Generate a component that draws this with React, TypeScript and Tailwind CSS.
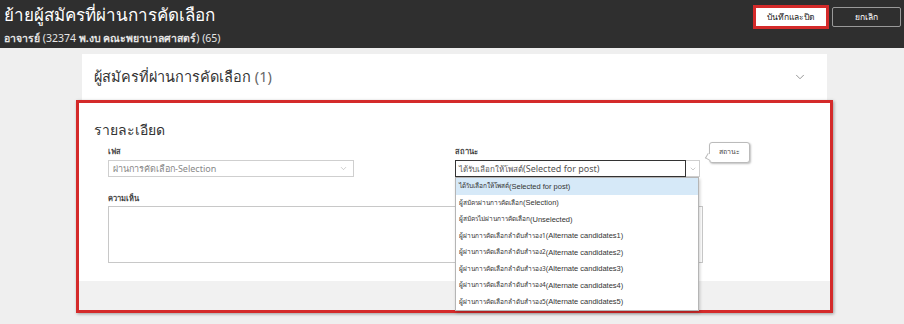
import { ChevronDown } from 'lucide-react'

const statusOptions: [string, string][] = [
  ['ได้รับเลือกให้โพสต์', '(Selected for post)'],
  ['ผู้สมัครผ่านการคัดเลือก', '(Selection)'],
  ['ผู้สมัครไม่ผ่านการคัดเลือก', '(Unselected)'],
  ['ผู้ผ่านการคัดเลือกลำดับสำรอง1', '(Alternate candidates1)'],
  ['ผู้ผ่านการคัดเลือกลำดับสำรอง2', '(Alternate candidates2)'],
  ['ผู้ผ่านการคัดเลือกลำดับสำรอง3', '(Alternate candidates3)'],
  ['ผู้ผ่านการคัดเลือกลำดับสำรอง4', '(Alternate candidates4)'],
  ['ผู้ผ่านการคัดเลือกลำดับสำรอง5', '(Alternate candidates5)'],
]

export default function App() {
  return (
    <div className="w-[904px] h-[324px] overflow-hidden bg-[#efefef] font-['Noto_Sans',sans-serif] text-[#333]">
      {/* Header bar */}
      <header className="h-12 bg-[#2f2f2f] flex justify-between pl-1 pr-[3px]">
        <div className="pt-[3px]">
          <h1 className="text-[17px] leading-[24px] text-white">ย้ายผู้สมัครที่ผ่านการคัดเลือก</h1>
          <p className="text-[10.5px] leading-4 text-[#e6e6e6] mt-[3px]">
            <span className="font-bold">อาจารย์</span> (32374 <span className="font-bold">พ.งบ คณะพยาบาลศาสตร์</span>) (65)
          </p>
        </div>
        <div className="flex gap-[5px] pt-[7px]">
          <button className="h-[20px] w-[72px] bg-white text-[#222] text-[8.5px] outline-[3px] outline-[#d42a2a] outline -outline-offset-1">
            บันทึกและปิด
          </button>
          <button className="h-[20px] w-[69px] border border-[#9a9a9a] rounded-[2px] text-white text-[8.5px]">
            ยกเลิก
          </button>
        </div>
      </header>

      {/* Candidates accordion */}
      <div className="ml-[82px] mt-[6px] w-[745px] h-[46px] bg-white flex items-center justify-between pl-3 pr-5">
        <span className="text-[14.5px] text-[#333]">
          ผู้สมัครที่ผ่านการคัดเลือก <span className="text-[#666]">(1)</span>
        </span>
        <ChevronDown className="w-[14px] h-[14px] text-[#888]" strokeWidth={1.5} />
      </div>

      {/* Details section (highlighted) */}
      <div className="ml-[76px] w-[757px] h-[213px] border-[3px] border-[#d42a2a] shadow-[1px_1px_3px_rgba(0,0,0,0.35)] flex flex-col">
        <div className="h-[178px] bg-white pl-[15px] pt-[15px]">
          <h2 className="text-[14px] leading-6 text-[#333]">รายละเอียด</h2>

          <div className="pl-[14px] mt-[3px] flex gap-[101px]">
            {/* Phase */}
            <div className="w-[246px]">
              <div className="text-[7.5px] leading-3 font-bold text-[#444]">เฟส</div>
              <div className="mt-[3px] h-[17px] border border-[#cfcfcf] flex items-center justify-between pl-[4px] pr-[5px]">
                <span className="text-[9px] text-[#888]">ผ่านการคัดเลือก-Selection</span>
                <ChevronDown className="w-[9px] h-[9px] text-[#aaa]" strokeWidth={1.5} />
              </div>
            </div>

            {/* Status */}
            <div className="w-[245px] relative">
              <div className="text-[7.5px] leading-3 font-bold text-[#444]">สถานะ</div>
              <div className="mt-[3px] h-[17px] flex">
                <div className="flex-1 border border-[#333] flex items-center pl-[3px] text-[#555] whitespace-nowrap">
                  <span className="text-[8px]">ได้รับเลือกให้โพสต์</span>
                  <span className="text-[9px]">(Selected for post)</span>
                </div>
                <div className="w-[14px] border border-l-0 border-[#cfcfcf] flex items-center justify-center">
                  <ChevronDown className="w-[8px] h-[8px] text-[#999]" strokeWidth={1.5} />
                </div>
              </div>

              {/* Tooltip */}
              <div className="absolute left-[254px] top-[-3px] w-[41px] h-[21px] bg-white border border-[#bbb] rounded-[3px] shadow-[1px_1px_2px_rgba(0,0,0,0.25)] flex items-center justify-center">
                <span className="text-[7px] text-[#444]">สถานะ</span>
                <div className="absolute left-[-4px] bottom-[2px] w-[6px] h-[6px] bg-white border-l border-b border-[#bbb] rotate-[30deg]" />
              </div>

              {/* Open dropdown */}
              <ul className="absolute left-0 top-[32px] w-[244px] bg-white border border-[#b5b5b5] shadow-[1px_2px_3px_rgba(0,0,0,0.2)] z-10">
                {statusOptions.map(([th, en], i) => (
                  <li
                    key={th}
                    className={`h-[16.5px] flex items-center pl-[3px] whitespace-nowrap text-[#333] ${
                      i === 0 ? 'bg-[#d6e9f8]' : ''
                    }`}
                  >
                    <span className="text-[6.5px]">{th}</span>
                    <span className="text-[7.5px] font-['Liberation_Sans',sans-serif]">{en}</span>
                  </li>
                ))}
              </ul>
            </div>
          </div>

          {/* Comment */}
          <div className="pl-[14px] mt-[15px]">
            <div className="text-[7.5px] leading-3 font-bold text-[#444]">ความเห็น</div>
            <div className="mt-[2px] w-[595px] h-[57px] border border-[#c8c8c8]" />
          </div>
        </div>
        <div className="flex-1 bg-[#f1f1f1]" />
      </div>
    </div>
  )
}
